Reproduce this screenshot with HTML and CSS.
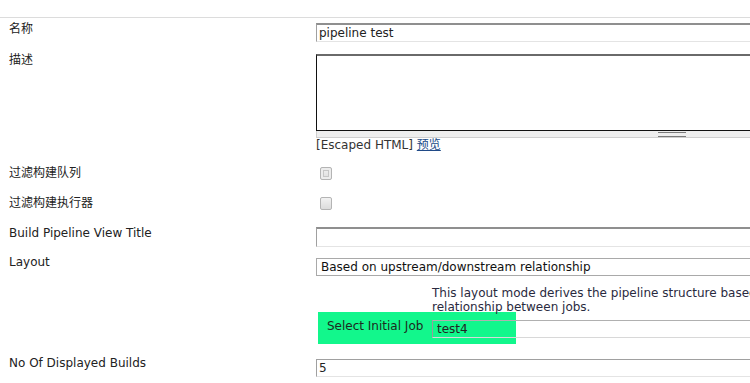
FILE: index.html
```html
<!DOCTYPE html>
<html lang="zh">
<head>
    <meta charset="UTF-8">
    <title>Build Pipeline View</title>
    <link rel="stylesheet" href="styles.css">
</head>
<body>
    <div class="top-rule"></div>

    <div class="form">
        <!-- Name -->
        <div class="row row-name">
            <div class="label">名称</div>
            <div class="field">
                <input type="text" class="text-input" value="pipeline test">
            </div>
        </div>

        <!-- Description -->
        <div class="row row-desc">
            <div class="label">描述</div>
            <div class="field">
                <textarea class="text-area"></textarea>
                <div class="grip"><span class="grip-lines"></span></div>
                <div class="hint">[Escaped HTML] <a href="#">预览</a></div>
            </div>
        </div>

        <!-- Filters -->
        <div class="row row-queue">
            <div class="label">过滤构建队列</div>
            <div class="field">
                <input type="checkbox" class="check check-marked">
            </div>
        </div>

        <div class="row row-executors">
            <div class="label">过滤构建执行器</div>
            <div class="field">
                <input type="checkbox" class="check">
            </div>
        </div>

        <!-- Title -->
        <div class="row row-title">
            <div class="label">Build Pipeline View Title</div>
            <div class="field">
                <input type="text" class="text-input">
            </div>
        </div>

        <!-- Layout -->
        <div class="row row-layout">
            <div class="label">Layout</div>
            <div class="field">
                <select class="select">
                    <option>Based on upstream/downstream relationship</option>
                </select>
                <p class="layout-help">This layout mode derives the pipeline structure based on the upstream/downstream trigger<br>relationship between jobs.</p>
                <div class="initial-job">
                    <span class="initial-job-label">Select Initial Job</span>
                    <input type="text" class="text-input job-input" value="test4">
                </div>
            </div>
        </div>

        <!-- Builds -->
        <div class="row row-builds">
            <div class="label">No Of Displayed Builds</div>
            <div class="field">
                <input type="text" class="text-input" value="5">
            </div>
        </div>
    </div>
</body>
</html>
```

FILE: styles.css
```css
html, body {
    overflow: hidden;
}

body {
    margin: 0;
    padding: 0;
    font-family: "DejaVu Sans", Verdana, "Noto Sans CJK SC", sans-serif;
    font-size: 12px;
    line-height: 15px;
    color: #222;
    background: #ffffff;
}

.top-rule {
    margin-top: 17px;
    height: 1px;
    background-color: #dcdcdc;
}

.form {
    padding-left: 9px;
}

.row {
    display: flex;
    align-items: flex-start;
}

.label {
    flex: 0 0 307px;
    width: 307px;
}

.field {
    flex: 0 0 712px;
    width: 712px;
}

/* vertical rhythm of the rows */
.row-name { padding-top: 4px; }
.row-name .field { margin-top: 1px; }
.row-desc { padding-top: 11px; }
.row-desc .field { margin-top: 1px; }
.row-queue { padding-top: 14px; }
.row-executors { padding-top: 15px; }
.row-title { padding-top: 14px; }
.row-title .field { margin-top: 2px; }
.row-layout { padding-top: 7px; }
.row-layout .field { margin-top: 4px; }
.row-builds { padding-top: 11px; }
.row-builds .field { margin-top: 4px; }
.row-title .label,
.row-layout .label,
.row-builds .label { padding-top: 1px; }

.text-input {
    display: block;
    box-sizing: border-box;
    width: 712px;
    height: 19px;
    margin: 0;
    padding: 0 2px;
    font-family: inherit;
    font-size: 12px;
    color: #222;
    background: #ffffff;
    border-style: solid;
    border-width: 2px 1px 1px 1px;
    border-color: #8f8f8f #d4d4d4 #e4e4e4 #a0a0a0;
    outline: none;
}

.row-title .text-input {
    height: 20px;
}

.row-builds .text-input {
    height: 18px;
    border-top-width: 1px;
    border-top-color: #a0a0a0;
}

.text-area {
    display: block;
    box-sizing: border-box;
    width: 712px;
    height: 77px;
    margin: 0;
    padding: 2px;
    resize: none;
    border-style: solid;
    border-width: 2px 1px 1px 1px;
    border-color: #6a6a6a #111 #111 #111;
    outline: none;
}

.grip {
    box-sizing: border-box;
    height: 7px;
    display: flex;
    justify-content: center;
    align-items: center;
    background-color: #eeeeee;
    border: 1px solid #cfcfcf;
    border-top: none;
}

.grip-lines {
    width: 28px;
    height: 3px;
    border-top: 1px solid #7a7a7a;
    border-bottom: 1px solid #7a7a7a;
}

.hint {
    line-height: 14px;
    color: #333;
}

.hint a {
    color: #204a87;
    text-decoration: underline;
}

.check {
    -webkit-appearance: none;
    appearance: none;
    display: block;
    box-sizing: border-box;
    width: 12px;
    height: 13px;
    margin: 1px 0 0 4px;
    border: 1px solid #b4b4b4;
    border-radius: 2px;
    background: linear-gradient(#f2f2f2, #dcdcdc);
}

.check-marked {
    box-shadow: inset 0 0 0 2px #ececec, inset 0 0 0 3px #c6c6c6;
}

.select {
    -webkit-appearance: none;
    appearance: none;
    display: block;
    box-sizing: border-box;
    width: 712px;
    height: 18px;
    margin: 0;
    padding: 0 4px;
    font-family: inherit;
    font-size: 12px;
    color: #111;
    background: #ffffff;
    border: 1px solid #a9a9a9;
    border-radius: 0;
    outline: none;
}

.layout-help {
    margin: 10px 0 0 116px;
    line-height: 14px;
    white-space: nowrap;
    color: #2a2a40;
}

.initial-job {
    display: flex;
    align-items: flex-start;
    width: 198px;
    height: 32px;
    box-sizing: border-box;
    margin: -2px 0 0 2px;
    padding: 8px 0 0 9px;
    background-color: #12f78c;
}

.initial-job-label {
    flex: 0 0 105px;
    line-height: 14px;
    margin-top: -1px;
    white-space: nowrap;
    color: #1d2a20;
}

.job-input {
    flex: 0 0 600px;
    height: 18px;
    padding: 0 4px;
    background: transparent;
    border-width: 1px;
    border-color: #b0b0b0 #d4d4d4 #d8d8d8 #9a9a9a;
}
```
